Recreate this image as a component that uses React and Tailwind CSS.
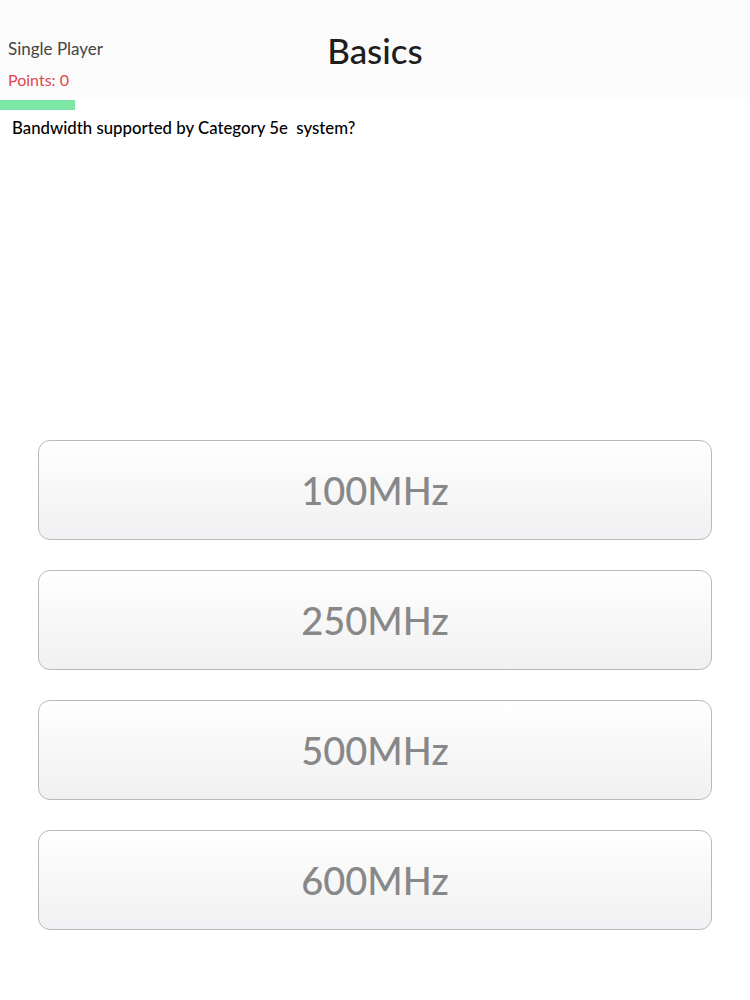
import React from 'react';

const answers = ['100MHz', '250MHz', '500MHz', '600MHz'];

function App() {
    return (
        <div className="min-h-screen bg-white" style={{ fontFamily: 'Lato, "Noto Sans", sans-serif' }}>
            <div className="relative h-[97px] bg-[#fcfbfc]">
                <div className="absolute left-[8px] top-[36px] text-[17px] text-[#444]">Single Player</div>
                <div className="absolute left-[8px] top-[68px] text-[16px] text-[#e0474c]">Points: 0</div>
                <div className="flex h-full justify-center pt-[28px]">
                    <h1 className="text-[35px] leading-[44px] font-medium text-[#1e1e1e]">Basics</h1>
                </div>
            </div>
            <div className="mt-[3px] h-[10px] w-[75px] bg-[#7de8a6]"></div>
            <p className="mt-[7px] pl-[12px] text-[16.8px] leading-[22px] font-medium text-black">Bandwidth supported by Category 5e&nbsp; system?</p>
            <div className="mt-[301px] flex flex-col gap-[30px] px-[38px]">
                {answers.map((a) => (
                    <button
                        key={a}
                        className="flex h-[100px] w-full items-center justify-center rounded-[12px] border border-[#b9b9b9] bg-gradient-to-b from-white to-[#f1f0f2] text-[38px] font-medium text-[#888]"
                    >
                        {a}
                    </button>
                ))}
            </div>
        </div>
    );
}

export default App;
